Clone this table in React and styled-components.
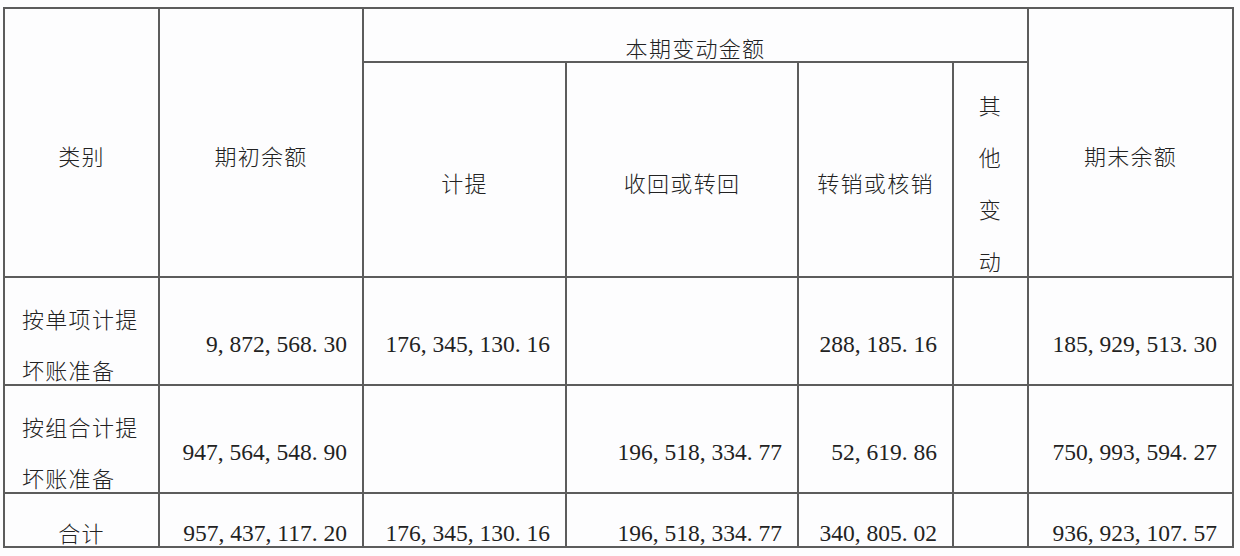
import React from "react";
import styled, { createGlobalStyle } from "styled-components";

const LINE = "#5c5c5c";
const PAPER = "#fdfdfe";

const GlobalStyle = createGlobalStyle`
  html, body {
    margin: 0;
    padding: 0;
    background: ${PAPER};
  }
`;

const Page = styled.div`
  padding: 7px 0 0 3px;
`;

const Table = styled.div`
  display: grid;
  grid-template-columns: 153px 202px 201px 230px 153px 73px 203px;
  grid-template-rows: 52px 213px 106px 106px 52px;
  gap: 2px;
  width: max-content;
  background: ${LINE};
  border: 2px solid ${LINE};
`;

const Cell = styled.div`
  grid-column: ${(p) => p.$col};
  grid-row: ${(p) => p.$row};
  background: ${PAPER};
  display: flex;
  align-items: center;
  justify-content: ${(p) => p.$justify || "center"};
  padding: 25px ${(p) => p.$pr ?? 0}px 0 ${(p) => p.$pl ?? 0}px;
  min-width: 0;
  overflow: visible;
`;

const Label = styled.span`
  font-family: "Noto Sans CJK SC", "Noto Sans", sans-serif;
  font-weight: 300;
  font-size: 22px;
  letter-spacing: 1.3px;
  line-height: 51px;
  color: #222;
`;

const Stacked = styled(Label)`
  display: block;
  width: 24px;
  line-height: 52px;
  text-align: center;
`;

const Amount = styled.span`
  font-family: "Liberation Serif", "Times New Roman", serif;
  font-size: 23.5px;
  line-height: 30px;
  color: #222;
  white-space: nowrap;
`;

const rows = [
  {
    label: "按单项计提坏账准备",
    values: ["9, 872, 568. 30", "176, 345, 130. 16", "", "288, 185. 16", "", "185, 929, 513. 30"],
  },
  {
    label: "按组合计提坏账准备",
    values: ["947, 564, 548. 90", "", "196, 518, 334. 77", "52, 619. 86", "", "750, 993, 594. 27"],
  },
  {
    label: "合计",
    total: true,
    values: ["957, 437, 117. 20", "176, 345, 130. 16", "196, 518, 334. 77", "340, 805. 02", "", "936, 923, 107. 57"],
  },
];

export default function App() {
  return (
    <>
      <GlobalStyle />
      <Page>
        <Table>
          <Cell $col="1" $row="1 / 3">
            <Label>类别</Label>
          </Cell>
          <Cell $col="2" $row="1 / 3">
            <Label>期初余额</Label>
          </Cell>
          <Cell $col="3 / 7" $row="1">
            <Label>本期变动金额</Label>
          </Cell>
          <Cell $col="7" $row="1 / 3">
            <Label>期末余额</Label>
          </Cell>
          <Cell $col="3" $row="2">
            <Label>计提</Label>
          </Cell>
          <Cell $col="4" $row="2">
            <Label>收回或转回</Label>
          </Cell>
          <Cell $col="5" $row="2">
            <Label>转销或核销</Label>
          </Cell>
          <Cell $col="6" $row="2">
            <Stacked>其他变动</Stacked>
          </Cell>

          {rows.map((r, i) => (
            <React.Fragment key={r.label}>
              <Cell
                $col="1"
                $row={String(i + 3)}
                $justify={r.total ? "center" : "flex-start"}
                $pl={r.total ? 0 : 17}
                $pr={r.total ? 0 : 10}
              >
                <Label>{r.label}</Label>
              </Cell>
              {r.values.map((v, j) => (
                <Cell key={j} $col={String(j + 2)} $row={String(i + 3)} $justify="flex-end" $pr={15}>
                  {v && <Amount>{v}</Amount>}
                </Cell>
              ))}
            </React.Fragment>
          ))}
        </Table>
      </Page>
    </>
  );
}
